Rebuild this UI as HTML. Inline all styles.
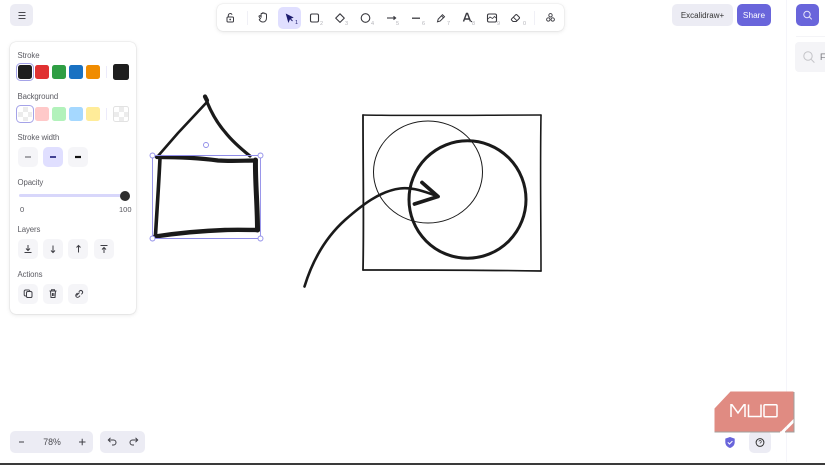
<!DOCTYPE html>
<html><head><meta charset="utf-8">
<style>
html,body{margin:0;padding:0;background:#fff;}
body{width:825px;height:464px;position:relative;overflow:hidden;font-family:"Liberation Sans",sans-serif;color:#4a4a52;}
.a{position:absolute;}
.btn{position:absolute;background:#ececf4;border-radius:5px;}
.lbl{position:absolute;left:17.5px;font-size:7.8px;letter-spacing:-.1px;line-height:10px;color:#5c5c63;}
.sw{position:absolute;width:14px;height:14px;border-radius:2.5px;}
.chk{background-color:#fff;background-image:linear-gradient(45deg,#ececec 25%,transparent 25%,transparent 75%,#ececec 75%),linear-gradient(45deg,#ececec 25%,transparent 25%,transparent 75%,#ececec 75%);background-size:10px 10px;background-position:0 0,5px 5px;}
.tb{position:absolute;width:20px;height:20px;background:#f5f5f8;border-radius:5px;}
svg{position:absolute;overflow:visible;}
.n{position:absolute;font-size:5.5px;color:#b4b4ba;line-height:6px;}
</style></head>
<body>
<!-- right rail -->
<div class="a" style="left:786px;top:0;width:1px;height:462px;background:#f5f5fa"></div>
<div class="a" style="left:796px;top:36px;width:29px;height:1px;background:#f4f4f7"></div>
<div class="btn" style="left:796px;top:4px;width:23px;height:22px;background:#6965db"></div>
<svg style="left:0;top:0" width="825" height="464" fill="none">
<circle cx="807" cy="14.500" r="3.200" stroke="#e4e3fa" stroke-width="1"/><path d="M809.400 17l2.400 2.400" stroke="#e4e3fa"/>
</svg>
<div class="a" style="left:795px;top:42px;width:30px;height:30px;background:#f4f4f7;border-radius:4px 0 0 4px"></div>
<svg style="left:0;top:0" width="825" height="464" fill="none">
<circle cx="808" cy="56" r="4.200" stroke="#c4c4c8"/><path d="M811 59.200l3.400 3.400" stroke="#c4c4c8"/>
</svg>
<div class="a" style="left:820px;top:52px;font-size:9px;line-height:11px;color:#77777d">F</div>

<!-- top-left menu -->
<div class="btn" style="left:10px;top:4px;width:23px;height:22px"></div>
<svg style="left:0;top:0" width="60" height="40" fill="none" stroke="#4a4a50" stroke-width="1.100"><path d="M18.500 12.500h7M18.500 15.500h7M18.500 18.500h7"/></svg>

<!-- panel -->
<div class="a" style="left:10px;top:42px;width:126px;height:272px;background:#fff;border-radius:6px;box-shadow:0 0 1px rgba(0,0,0,.25),0 1px 4px rgba(0,0,0,.1)"></div>
<div class="lbl" style="top:51px">Stroke</div>
<div class="sw" style="left:18px;top:65px;background:#1e1e1e;outline:1px solid #a5a3e8;outline-offset:1px"></div>
<div class="sw" style="left:35px;top:65px;background:#e03131"></div>
<div class="sw" style="left:52px;top:65px;background:#2f9e44"></div>
<div class="sw" style="left:69px;top:65px;background:#1971c2"></div>
<div class="sw" style="left:86px;top:65px;background:#f08c00"></div>
<div class="a" style="left:106px;top:66px;width:1px;height:12px;background:#ecebfa"></div>
<div class="sw" style="left:113px;top:64px;width:16px;height:16px;background:#1e1e1e"></div>

<div class="lbl" style="top:92px">Background</div>
<div class="sw chk" style="left:18px;top:107px;outline:1px solid #a5a3e8;outline-offset:1px"></div>
<div class="sw" style="left:35px;top:107px;background:#ffc9c9"></div>
<div class="sw" style="left:52px;top:107px;background:#b2f2bb"></div>
<div class="sw" style="left:69px;top:107px;background:#a5d8ff"></div>
<div class="sw" style="left:86px;top:107px;background:#ffec99"></div>
<div class="a" style="left:106px;top:108px;width:1px;height:12px;background:#ecebfa"></div>
<div class="sw chk" style="left:113px;top:106px;border:1px solid #e2e2e2;width:14px;height:14px"></div>

<div class="lbl" style="top:133px">Stroke width</div>
<div class="tb" style="left:18px;top:147px"></div>
<div class="tb" style="left:43px;top:147px;background:#e0dfff"></div>
<div class="tb" style="left:68px;top:147px"></div>
<svg style="left:0;top:0" width="140" height="320" fill="none">
<path d="M25 157h6" stroke="#55555c" stroke-width="1"/>
<path d="M50 157h6" stroke="#1a1a7a" stroke-width="1.600"/>
<path d="M75 157h6" stroke="#111" stroke-width="2.200"/>
</svg>

<div class="lbl" style="top:178px">Opacity</div>
<div class="a" style="left:19px;top:194px;width:106px;height:3px;background:#d8d7fb;border-radius:2px"></div>
<div class="a" style="left:120px;top:190.500px;width:10px;height:10px;background:#2e2e2e;border-radius:50%"></div>
<div class="a" style="left:20px;top:204.500px;font-size:7.500px;line-height:10px;color:#55555c">0</div>
<div class="a" style="left:119px;top:204.500px;font-size:7.500px;line-height:10px;color:#55555c">100</div>

<div class="lbl" style="top:225px">Layers</div>
<div class="tb" style="left:18px;top:239px"></div>
<div class="tb" style="left:43px;top:239px"></div>
<div class="tb" style="left:68px;top:239px"></div>
<div class="tb" style="left:94px;top:239px"></div>
<svg style="left:0;top:0" width="140" height="320" fill="none" stroke="#3f3f46" stroke-width="1">
<path d="M24.500 252.500h7M28 245v5.500M26 248.500l2 2 2-2"/>
<path d="M53 245.500v7M51 250.500l2 2 2-2"/>
<path d="M78.500 252.500v-7M76.500 247.500l2-2 2 2"/>
<path d="M100.500 245.500h7M104 253v-5.500M102 249.500l2-2 2 2"/>
</svg>

<div class="lbl" style="top:270px">Actions</div>
<div class="tb" style="left:18px;top:284px"></div>
<div class="tb" style="left:43px;top:284px"></div>
<div class="tb" style="left:68px;top:284px"></div>
<svg style="left:0;top:0" width="140" height="320" fill="none" stroke="#3f3f46" stroke-width="1">
<rect x="26.500" y="291.500" width="5.500" height="6" rx="1.300"/><path d="M26 296h-.5a1.300 1.300 0 0 1-1.300-1.300v-3.400a1.300 1.300 0 0 1 1.300-1.300h3.200a1.300 1.300 0 0 1 1.200 1"/>
<path d="M49.500 291h7M51.500 291v-1.200h3v1.200M50.500 291l.5 6.500h4l.5-6.500M52.500 293v3M53.800 293v3"/>
<path d="M76.500 295.500l3-3M77.500 293l-1.200 1.200a1.800 1.800 0 0 0 2.600 2.600l1.200-1.200M78.800 291.800l1-1a1.800 1.800 0 0 1 2.500 2.500l-1 1"/>
</svg>

<!-- toolbar -->
<div class="a" style="left:217px;top:4px;width:347px;height:27px;background:#fff;border-radius:6px;box-shadow:0 0 1px rgba(0,0,0,.2),0 1px 4px rgba(0,0,0,.1)"></div>
<div class="a" style="left:278px;top:7px;width:23px;height:22px;background:#e0dfff;border-radius:5px"></div>
<div class="a" style="left:247px;top:11px;width:1px;height:14px;background:#f0f0f6"></div>
<div class="a" style="left:534px;top:11px;width:1px;height:14px;background:#f0f0f6"></div>
<svg style="left:0;top:0" width="600" height="40" fill="none" stroke="#3a3a40" stroke-width="1">
<rect x="227" y="17" width="6.500" height="5" rx="1"/><path d="M228.300 17v-1.700a2 2 0 0 1 3.800-.6"/><circle cx="230.200" cy="19.500" r=".4"/>
<path d="M260.500 18.500l-1.300-1.700c-.6-.9.500-1.600 1.200-.9l.7.800v-2.700c0-.9 1.200-.9 1.200 0v-.6c0-.9 1.400-.9 1.400 0v.3c0-.8 1.400-.8 1.400 0v.6c0-.8 1.400-.7 1.400.2v3.500c0 2.400-1.500 4-3.500 4-1.800 0-2.900-.9-3.700-2.300z"/>
<path d="M286.500 14.500l2 7 1.200-2.800 2.800-1.200z" fill="#1c1c6e" stroke="#1c1c6e"/><path d="M290 18.500l2.500 2.500" stroke="#1c1c6e"/>
<rect x="310.500" y="14" width="8" height="8" rx="1.500" stroke-width="1.100"/>
<path d="M340 13.800l4.300 4.300-4.300 4.300-4.300-4.300z" stroke-linejoin="round" stroke-width="1.100"/>
<circle cx="365.500" cy="18" r="4.300" stroke-width="1.100"/>
<path d="M387 18h8.500" stroke-width="1.100"/><path d="M393.500 16.200l2.200 1.800-2.200 1.800" fill="#3a3a40"/>
<path d="M412 18.200h8" stroke-width="1.300"/>
<path d="M437.500 21.800l.7-2.700 4.300-4.400 2 2-4.400 4.400zM441.500 15.800l2 2"/>
<path d="M463.500 21.500l3-8h1l3 8M465 19h4.200" stroke-width="1.400"/><path d="M471 21.500h1" stroke-width="1.200"/>
<rect x="487.500" y="14" width="9" height="8" rx="1.500" stroke-width="1.100"/><path d="M488 19l2-2 2.500 1.500 2-2 1.500 1.500" stroke-width=".8"/>
<path d="M513 21.500l-1.300-1.300a1 1 0 0 1 0-1.400l3.900-3.900a1 1 0 0 1 1.400 0l2.200 2.200a1 1 0 0 1 0 1.400l-3 3zM513.500 17.300l3.400 3.400"/>
<circle cx="550.500" cy="15.300" r="1.700" stroke-width=".9"/><circle cx="548.300" cy="19.500" r="1.700" stroke-width=".9"/><circle cx="552.700" cy="19.500" r="1.700" stroke-width=".9"/>
</svg>
<div class="n" style="left:295px;top:20px;color:#1c1c6e">1</div>
<div class="n" style="left:320px;top:21px">2</div>
<div class="n" style="left:345px;top:21px">3</div>
<div class="n" style="left:371px;top:21px">4</div>
<div class="n" style="left:396px;top:21px">5</div>
<div class="n" style="left:422px;top:21px">6</div>
<div class="n" style="left:447px;top:21px">7</div>
<div class="n" style="left:472px;top:21px">8</div>
<div class="n" style="left:497px;top:21px">9</div>
<div class="n" style="left:523px;top:21px">0</div>

<!-- top right -->
<div class="btn" style="left:672px;top:4px;width:61px;height:22px;font-size:8px;line-height:23px;text-align:center;color:#333">Excalidraw+</div>
<div class="btn" style="left:737px;top:4px;width:34px;height:22px;background:#6965db;color:#fff;font-size:8.300px;line-height:23px;text-align:center">Share</div>

<!-- drawing -->
<svg style="left:0;top:0" width="825" height="464" fill="none" stroke="#1a1a1a" stroke-linecap="round" stroke-linejoin="round">
<!-- house -->
<path d="M158 156L178 133L207 102" stroke-width="2.600"/>
<path d="M207 102C212 114 218 124 225 132C232 141 240 148 250 156" stroke-width="3.200"/>
<path d="M205 96.500l2 4" stroke-width="4.200"/>
<path d="M157 157C180 157 200 158 218 160.500C232 161.500 245 160.500 255 160.500" stroke-width="4.200"/>
<path d="M160 158C159 180 157 210 155.500 235" stroke-width="3.600"/>
<path d="M255.500 160C255 180 257.500 205 257.500 230" stroke-width="5"/>
<path d="M155 236.500C172 234 195 231 225 230C238 229.500 250 230 258 230" stroke-width="4.400"/>
<!-- selection -->
<g stroke="#8f8ce8" stroke-width=".9" fill="#fff">
<rect x="152.500" y="155.500" width="108" height="83" fill="none"/>
<circle cx="152.500" cy="155.500" r="2.500"/><circle cx="260.500" cy="155.500" r="2.500"/>
<circle cx="152.500" cy="238.500" r="2.500"/><circle cx="260.500" cy="238.500" r="2.500"/>
<circle cx="206" cy="145" r="2.500"/>
</g>
<!-- rect -->
<path d="M363 115C420 116 490 115 541 115" stroke-width="1.500"/>
<path d="M541 115C540 170 541 220 541 271" stroke-width="1.600"/>
<path d="M541 271C480 270 420 270 363 270" stroke-width="1.700"/>
<path d="M363 270C364 220 363 170 363 115" stroke-width="1.800"/>
<!-- circles -->
<ellipse cx="428" cy="172" rx="54.500" ry="51" stroke-width="1"/>
<ellipse cx="467.500" cy="199.500" rx="58.500" ry="58.700" stroke-width="3"/>
<!-- arrow -->
<path d="M304.500 286.500C312 262 325 238 345 220C362 205 380 191 400 188.500C413 187 426 192 438 196.500" stroke-width="2.600"/>
<path d="M422 182.500L438 196.500L414.500 204" stroke-width="3.800"/>
</svg>

<!-- bottom controls -->
<div class="btn" style="left:10px;top:431px;width:83px;height:22px"></div>
<div class="btn" style="left:100px;top:431px;width:45px;height:22px"></div>
<div class="a" style="left:32px;top:431px;width:40px;height:22px;font-size:8.800px;line-height:22px;text-align:center;color:#4a4a50">78%</div>
<svg style="left:0;top:0" width="160" height="464" fill="none" stroke="#3f3f46" stroke-width="1">
<path d="M19 442h5"/><path d="M79 442h6.500M82.200 438.800v6.500"/>
<path d="M108.500 440h5a2.500 2.500 0 0 1 0 5h-1.500M110.500 437.800l-2.200 2.200 2.200 2.200"/>
<path d="M137.500 440h-5a2.500 2.500 0 0 0 0 5h1.500M135.500 437.800l2.200 2.200-2.200 2.200"/>
</svg>

<!-- help / shield -->
<div class="btn" style="left:749px;top:431px;width:22px;height:22px"></div>
<svg style="left:0;top:0" width="825" height="464" fill="none">
<circle cx="760" cy="442.500" r="3.900" stroke="#333" stroke-width="1"/>
<path d="M758.900 441.500a1.200 1.200 0 1 1 1.700 1.200c-.4.200-.6.400-.6.800" stroke="#333" stroke-width=".7"/>
<path d="M730 437l4.700 1.600v3.500c0 3-2 5-4.700 5.900-2.700-.9-4.700-2.900-4.700-5.900v-3.500z" fill="#6965db"/>
<path d="M727.800 442.300l1.700 1.700 2.900-2.900" stroke="#fff" stroke-width="1"/>
<!-- MUO badge -->
<path d="M730.500 391.500H793.500V419L781 431.500H714.500V408.500Z" fill="#e08b82"/>
<path d="M785 431.500L793.500 423V431.500Z" fill="#e08b82"/>
<path d="M714.500 432H780M785 432H794V392" stroke="#9f9f9c" stroke-width="1"/>
<path d="M731 417V404.800H732L738 413L744 404.800H745V417" stroke="#fff" stroke-width="1.500"/>
<path d="M748.500 404.500V416.500H761V404.500" stroke="#fff" stroke-width="1.500"/>
<rect x="764" y="404.800" width="13" height="12" rx="1" stroke="#fff" stroke-width="1.500"/>
</svg>

<div class="a" style="left:0;top:462.500px;width:825px;height:2px;background:#3a3a3a"></div>
</body></html>
